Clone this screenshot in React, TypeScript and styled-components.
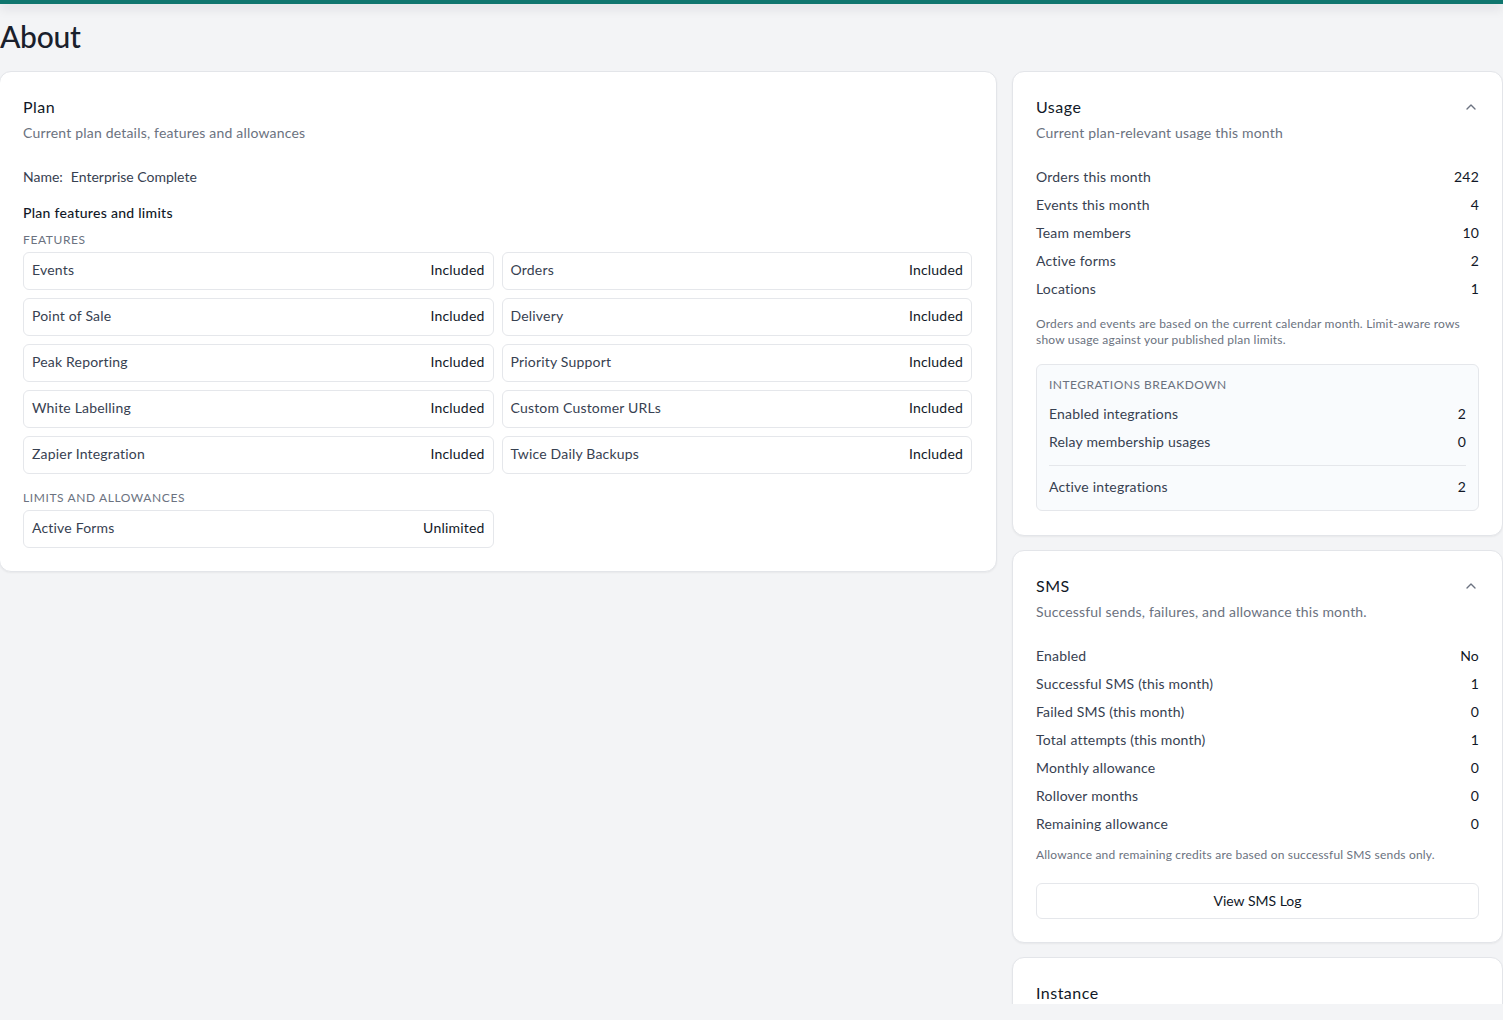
import React from "react";
import styled, { createGlobalStyle } from "styled-components";
import { ChevronUp } from "lucide-react";

const GlobalStyle = createGlobalStyle`
  html, body {
    margin: 0;
    padding: 0;
    background: #f3f4f6;
    overflow: hidden;
  }
  * {
    box-sizing: border-box;
  }
  body {
    font-family: "Lato", "Noto Sans", sans-serif;
    letter-spacing: 0.012em;
    color: #111827;
  }
`;

const Viewport = styled.div`
  height: 1004px;
  overflow: hidden;
  display: flex;
  flex-direction: column;
`;

const TopBar = styled.div`
  flex: none;
  height: 4px;
  background: #0f766e;
  box-shadow: 0 3px 12px rgba(17, 24, 39, 0.18);
  position: relative;
`;

const Content = styled.main`
  width: 1504px;
  margin-left: -1px;
`;

const Title = styled.h1`
  margin: 0 0 0 1px;
  padding-top: 14px;
  height: 67px;
  font-size: 30px;
  line-height: 36px;
  font-weight: 500;
  letter-spacing: -0.01em;
  color: #1a202c;
`;

const Columns = styled.div`
  display: grid;
  grid-template-columns: 998px 491px;
  gap: 15px;
  align-items: start;
`;

const Side = styled.div`
  display: flex;
  flex-direction: column;
  gap: 14px;
`;

const Card = styled.section<{ $wide?: boolean }>`
  background: #fff;
  border: 1px solid #e3e5e9;
  border-radius: 12px;
  padding: 23px ${(p) => (p.$wide ? 24 : 23)}px 23px 23px;
  box-shadow: 0 1px 2px rgba(0, 0, 0, 0.05);
`;

const CardHead = styled.div`
  display: flex;
  justify-content: space-between;
  align-items: center;
`;

const CardTitle = styled.h2`
  margin: 0;
  font-size: 16px;
  line-height: 24px;
  font-weight: 400;
  letter-spacing: 0.03em;
  color: #111827;
`;

const Toggle = styled.span`
  display: flex;
  color: #6b7280;
`;

const CardDesc = styled.p`
  margin: 4px 0 24px;
  font-size: 14px;
  line-height: 20px;
  color: #6b7280;
`;

const NameRow = styled.div`
  font-size: 14px;
  line-height: 20px;
  letter-spacing: 0;
  color: #374151;
  display: flex;
  gap: 8px;
`;

const SectionTitle = styled.h3`
  margin: 16px 0 9px;
  font-size: 14px;
  line-height: 20px;
  font-weight: 500;
  letter-spacing: 0.02em;
  color: #111827;
`;

const Eyebrow = styled.div<{ $top?: number }>`
  margin-top: ${(p) => p.$top ?? 0}px;
  margin-bottom: 4px;
  font-size: 12px;
  line-height: 16px;
  letter-spacing: 0.05em;
  color: #6b7280;
  text-transform: uppercase;
`;

const TileGrid = styled.div`
  display: grid;
  grid-template-columns: repeat(2, 1fr);
  gap: 8px;
`;

const Tile = styled.div`
  display: flex;
  justify-content: space-between;
  border: 1px solid #e5e7eb;
  border-radius: 6px;
  padding: 7px 8px 9px;
  font-size: 14px;
  line-height: 20px;
  color: #374151;
`;

const TileValue = styled.span`
  color: #111827;
`;

const StatList = styled.div`
  display: flex;
  flex-direction: column;
  gap: 8px;
`;

const Stat = styled.div`
  display: flex;
  justify-content: space-between;
  font-size: 14px;
  line-height: 20px;
  color: #374151;
`;

const StatValue = styled.span`
  color: #111827;
`;

const Note = styled.p<{ $top: number; $bottom: number }>`
  margin: ${(p) => p.$top}px 0 ${(p) => p.$bottom}px;
  font-size: 12px;
  line-height: 16px;
  color: #6b7280;
`;

const Breakdown = styled.div`
  background: #f9fbfd;
  border: 1px solid #e5e7eb;
  border-radius: 6px;
  padding: 12px 12px 13px;
  margin-bottom: 1px;
`;

const BreakdownLabel = styled.div`
  margin-bottom: 11px;
  font-size: 12px;
  line-height: 16px;
  letter-spacing: 0.04em;
  color: #6b7280;
  text-transform: uppercase;
`;

const Divider = styled.hr`
  margin: 13px 0 11px;
  border: 0;
  border-top: 1px solid #e5e7eb;
`;

const OutlineButton = styled.button`
  display: block;
  width: 100%;
  height: 36px;
  padding: 0 0 2px;
  background: #fff;
  border: 1px solid #e5e7eb;
  border-radius: 6px;
  font: inherit;
  font-size: 14px;
  color: #111827;
`;

const features = [
  ["Events", "Orders"],
  ["Point of Sale", "Delivery"],
  ["Peak Reporting", "Priority Support"],
  ["White Labelling", "Custom Customer URLs"],
  ["Zapier Integration", "Twice Daily Backups"],
].flat();

const usage: [string, string][] = [
  ["Orders this month", "242"],
  ["Events this month", "4"],
  ["Team members", "10"],
  ["Active forms", "2"],
  ["Locations", "1"],
];

const sms: [string, string][] = [
  ["Enabled", "No"],
  ["Successful SMS (this month)", "1"],
  ["Failed SMS (this month)", "0"],
  ["Total attempts (this month)", "1"],
  ["Monthly allowance", "0"],
  ["Rollover months", "0"],
  ["Remaining allowance", "0"],
];

const Stats = ({ rows }: { rows: [string, string][] }) => (
  <StatList>
    {rows.map(([label, value]) => (
      <Stat key={label}>
        <span>{label}</span>
        <StatValue>{value}</StatValue>
      </Stat>
    ))}
  </StatList>
);

const App = () => {
  return (
    <Viewport>
      <GlobalStyle />
      <TopBar />
      <Content>
        <Title>About</Title>
        <Columns>
          <Card $wide>
            <CardTitle>Plan</CardTitle>
            <CardDesc>Current plan details, features and allowances</CardDesc>
            <NameRow>
              <span>Name:</span>
              <span>Enterprise Complete</span>
            </NameRow>
            <SectionTitle>Plan features and limits</SectionTitle>
            <Eyebrow>Features</Eyebrow>
            <TileGrid>
              {features.map((name) => (
                <Tile key={name}>
                  <span>{name}</span>
                  <TileValue>Included</TileValue>
                </Tile>
              ))}
            </TileGrid>
            <Eyebrow $top={16}>Limits and allowances</Eyebrow>
            <TileGrid>
              <Tile>
                <span>Active Forms</span>
                <TileValue>Unlimited</TileValue>
              </Tile>
            </TileGrid>
          </Card>
          <Side>
            <Card>
              <CardHead>
                <CardTitle>Usage</CardTitle>
                <Toggle>
                  <ChevronUp size={16} />
                </Toggle>
              </CardHead>
              <CardDesc>Current plan-relevant usage this month</CardDesc>
              <Stats rows={usage} />
              <Note $top={17} $bottom={16}>
                Orders and events are based on the current calendar month.
                Limit-aware rows show usage against your published plan limits.
              </Note>
              <Breakdown>
                <BreakdownLabel>Integrations breakdown</BreakdownLabel>
                <Stats
                  rows={[
                    ["Enabled integrations", "2"],
                    ["Relay membership usages", "0"],
                  ]}
                />
                <Divider />
                <Stats rows={[["Active integrations", "2"]]} />
              </Breakdown>
            </Card>
            <Card>
              <CardHead>
                <CardTitle>SMS</CardTitle>
                <Toggle>
                  <ChevronUp size={16} />
                </Toggle>
              </CardHead>
              <CardDesc>Successful sends, failures, and allowance this month.</CardDesc>
              <Stats rows={sms} />
              <Note $top={13} $bottom={20}>
                Allowance and remaining credits are based on successful SMS sends only.
              </Note>
              <OutlineButton>View SMS Log</OutlineButton>
            </Card>
            <Card>
              <CardTitle>Instance</CardTitle>
            </Card>
          </Side>
        </Columns>
      </Content>
    </Viewport>
  );
};

export default App;
